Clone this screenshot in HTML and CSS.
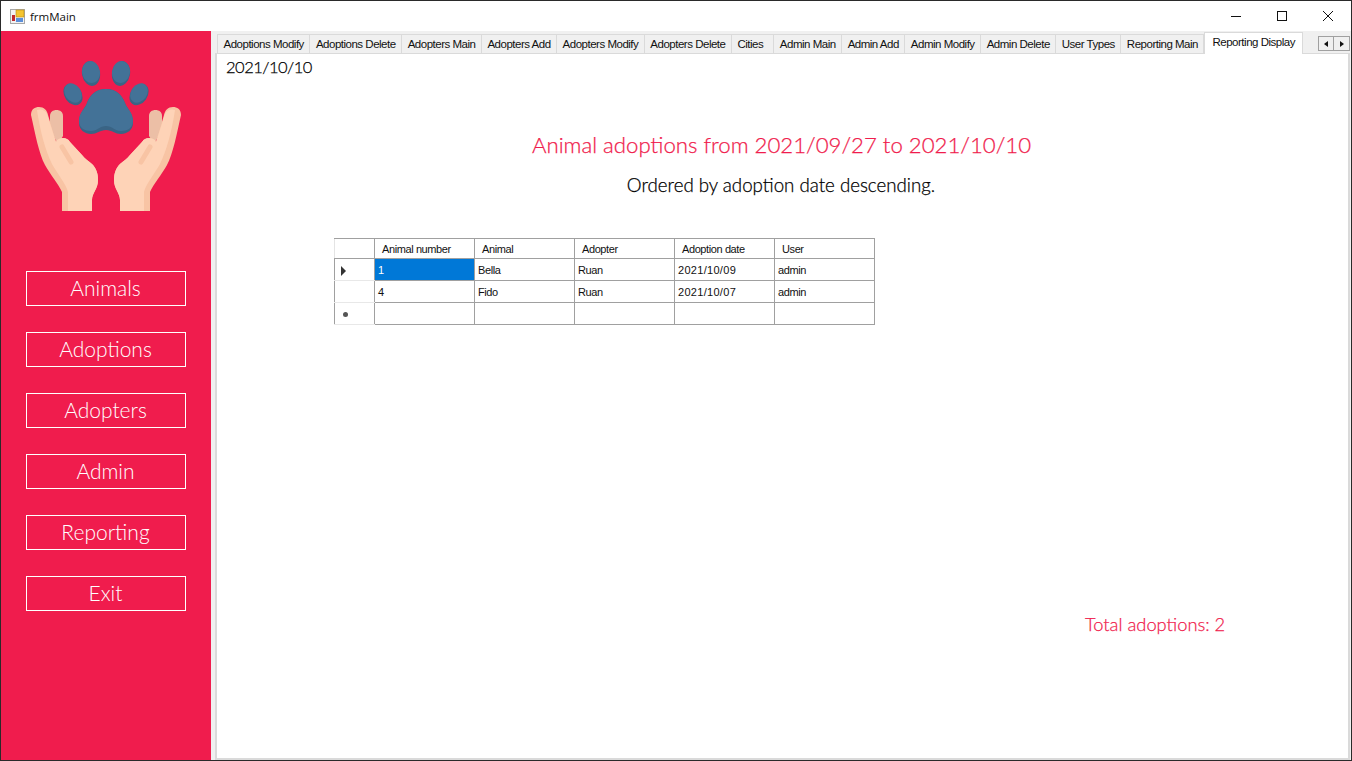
FILE: index.html
```html
<!DOCTYPE html>
<html lang="en">
<head>
  <meta charset="UTF-8" />
  <title>frmMain</title>
  <link rel="stylesheet" href="styles.css">
</head>
<body>
  <div class="window">
    <div class="titlebar">
      <svg class="app-icon" width="15" height="15" viewBox="0 0 15 15">
        <rect x="0.5" y="0.5" width="14" height="14" fill="#f2f2f2" stroke="#a8a8a8"/>
        <rect x="6" y="1" width="8" height="7" fill="#f4c430" stroke="#b98a10" stroke-width="0.6"/>
        <rect x="2" y="6" width="3" height="6" fill="#c0282d"/>
        <rect x="6" y="9" width="7" height="4" fill="#5b8fd9"/>
      </svg>
      <span class="title-text">frmMain</span>
      <div class="controls">
        <svg width="46" height="30" viewBox="0 0 46 30"><path d="M18 15.500h10" stroke="#111" fill="none"/></svg>
        <svg width="46" height="30" viewBox="0 0 46 30"><rect x="18.500" y="10.500" width="9" height="9" stroke="#111" fill="none"/></svg>
        <svg width="46" height="30" viewBox="0 0 46 30"><path d="M18 10l10 10M28 10l-10 10" stroke="#111" fill="none"/></svg>
      </div>
    </div>

    <div class="main">
      <aside class="sidebar">
        <svg class="logo" width="152" height="152" viewBox="30 60 152 152">
          <defs>
            <g id="hand">
              <path d="M50 116c0-4 3-6 6.500-6s6.500 2 6.500 6v20l-5 8-8-14z" fill="#ecbfa6"/>
              <path d="M31 115c0-6 4-8 8-8 5 0 8 3 9 8l8 27c1-3 4-4 7-4 3 0 5 1 7 4l12 13c3 4 7 6 10 9 4 4 6 9 6 16 0 9-6 13-6 20v11H62v-19c-3-7-12-18-17-27-6-11-10-32-14-50z" fill="#f8c4a4"/>
              <path d="M37 110c5-2 10 1 11 7l8 25c1-3 4-4 7-4 3 0 5 1 7 4l12 13c3 4 7 6 10 9 4 4 6 9 6 16 0 9-6 13-6 20v11H68v-19c-2-8-11-19-16-28-6-12-12-33-15-54z" fill="#fed3b7"/>
              <path d="M62 147l9 15" stroke="#f8c4a4" stroke-width="5" stroke-linecap="round" fill="none"/>
            </g>
          </defs>
          <use href="#hand"/>
          <use href="#hand" transform="translate(212 0) scale(-1 1)"/>
          <ellipse cx="91" cy="73.500" rx="9" ry="12.500" transform="rotate(-10 91 73.500)" fill="#3a6485"/>
          <ellipse cx="121" cy="73.500" rx="9" ry="12.500" transform="rotate(10 121 73.500)" fill="#3a6485"/>
          <ellipse cx="73" cy="94.500" rx="8.500" ry="11.500" transform="rotate(-35 73 94.500)" fill="#3a6485"/>
          <ellipse cx="139" cy="94.500" rx="8.500" ry="11.500" transform="rotate(35 139 94.500)" fill="#3a6485"/>
          <ellipse cx="91" cy="72" rx="9" ry="11" transform="rotate(-10 91 72)" fill="#437297"/>
          <ellipse cx="121" cy="72" rx="9" ry="11" transform="rotate(10 121 72)" fill="#437297"/>
          <ellipse cx="73" cy="93" rx="8" ry="10.500" transform="rotate(-35 73 93)" fill="#437297"/>
          <ellipse cx="139" cy="93" rx="8" ry="10.500" transform="rotate(35 139 93)" fill="#437297"/>
          <path d="M106 89c10 0 16 6 19 14 2 6 8 9 8 20 0 7-6 11-12 11-6 0-9-4-15-4s-9 4-15 4c-6 0-12-4-12-11 0-11 6-14 8-20 3-8 9-14 19-14z" fill="#3a6485"/>
          <path d="M106 89c10 0 16 6 19 14 2 6 8 9 8 18 0 7-6 10-12 10-6 0-9-5-15-5s-9 5-15 5c-6 0-12-3-12-10 0-9 6-12 8-18 3-8 9-14 19-14z" fill="#437297"/>
        </svg>
        <nav class="nav">
          <button class="nav-btn">Animals</button>
          <button class="nav-btn">Adoptions</button>
          <button class="nav-btn">Adopters</button>
          <button class="nav-btn">Admin</button>
          <button class="nav-btn">Reporting</button>
          <button class="nav-btn">Exit</button>
        </nav>
      </aside>

      <section class="tabcontrol">
        <div class="tabstrip">
          <div class="tab">Adoptions Modify</div>
          <div class="tab">Adoptions Delete</div>
          <div class="tab">Adopters Main</div>
          <div class="tab">Adopters Add</div>
          <div class="tab">Adopters Modify</div>
          <div class="tab">Adopters Delete</div>
          <div class="tab tab-cities">Cities</div>
          <div class="tab">Admin Main</div>
          <div class="tab">Admin Add</div>
          <div class="tab">Admin Modify</div>
          <div class="tab">Admin Delete</div>
          <div class="tab">User Types</div>
          <div class="tab">Reporting Main</div>
          <div class="tab active">Reporting Display</div>
          <div class="scroll-btns">
            <div class="scroll-btn"><span class="arrow-left"></span></div>
            <div class="scroll-btn"><span class="arrow-right"></span></div>
          </div>
        </div>

        <div class="page">
          <div class="date">2021/10/10</div>
          <h1 class="report-title">Animal adoptions from 2021/09/27 to 2021/10/10</h1>
          <p class="report-sub">Ordered by adoption date descending.</p>

          <table class="grid">
            <thead>
              <tr>
                <th class="row-head"></th>
                <th>Animal number</th>
                <th>Animal</th>
                <th>Adopter</th>
                <th>Adoption date</th>
                <th>User</th>
              </tr>
            </thead>
            <tbody>
              <tr>
                <td class="row-head"><span class="row-arrow"></span></td>
                <td class="selected">1</td>
                <td>Bella</td>
                <td>Ruan</td>
                <td class="num">2021/10/09</td>
                <td>admin</td>
              </tr>
              <tr>
                <td class="row-head"></td>
                <td>4</td>
                <td>Fido</td>
                <td>Ruan</td>
                <td class="num">2021/10/07</td>
                <td>admin</td>
              </tr>
              <tr>
                <td class="row-head"><span class="row-new"></span></td>
                <td></td>
                <td></td>
                <td></td>
                <td></td>
                <td></td>
              </tr>
            </tbody>
          </table>

          <div class="total">Total adoptions: 2</div>
        </div>
      </section>
    </div>
  </div>
</body>
</html>
```

FILE: styles.css
```css
html, body {
  margin: 0;
  padding: 0;
  height: 100%;
  overflow: hidden;
}

body {
  font-family: "Liberation Sans", Arial, sans-serif;
  background: #f0f0f0;
}

.window {
  box-sizing: border-box;
  width: 1352px;
  height: 761px;
  display: flex;
  flex-direction: column;
  border: 1px solid #2a2a2a;
}

/* Title bar */
.titlebar {
  height: 30px;
  background: white;
  display: flex;
  align-items: center;
  padding-left: 9px;
  flex-shrink: 0;
}

.app-icon {
  margin-right: 5px;
}

.title-text {
  font-family: "Open Sans", sans-serif;
  font-size: 11.5px;
  color: #111;
}

.controls {
  margin-left: auto;
  display: flex;
  height: 30px;
}

/* Sidebar */
.main {
  flex: 1;
  display: flex;
  min-height: 0;
}

.sidebar {
  width: 210px;
  background: #f01c4d;
  flex-shrink: 0;
  padding: 29px 0 0 25px;
  box-sizing: border-box;
}

.logo {
  display: block;
  margin-left: 4px;
}

.nav {
  margin-top: 59px;
  display: flex;
  flex-direction: column;
  gap: 26px;
}

.nav-btn {
  width: 160px;
  height: 35px;
  padding: 0 1px 2px 0;
  background: transparent;
  border: 1px solid white;
  color: white;
  font-family: Lato, sans-serif;
  font-weight: 300;
  font-size: 21px;
  cursor: pointer;
}

/* Tabs */
.tabcontrol {
  flex: 1;
  display: flex;
  flex-direction: column;
  min-width: 0;
  padding: 0 1px 0 4px;
}

.tabstrip {
  height: 22px;
  display: flex;
  align-items: flex-end;
  padding-left: 2px;
  flex-shrink: 0;
  position: relative;
}

.tab {
  box-sizing: border-box;
  height: 19px;
  padding: 0 5.5px;
  background: #f0f0f0;
  border: 1px solid #dadada;
  border-left: none;
  border-bottom: none;
  font-size: 11.5px;
  letter-spacing: -0.49px;
  line-height: 19px;
  color: #111;
  white-space: nowrap;
}

.tab:first-child {
  border-left: 1px solid #dadada;
}

.tab-cities {
  padding-right: 10px;
}

.tab.active {
  height: 22px;
  line-height: 19px;
  padding: 0 7px;
  background: white;
  position: relative;
  top: 1px;
  z-index: 1;
  border-left: 1px solid #dadada;
}

.scroll-btns {
  position: absolute;
  right: 0;
  top: 5px;
  display: flex;
}

.scroll-btn {
  box-sizing: border-box;
  width: 16px;
  height: 15px;
  background: #f0f0f0;
  border: 1px solid #a0a0a0;
  display: flex;
  align-items: center;
  justify-content: center;
}

.scroll-btn + .scroll-btn {
  border-left: none;
}

.arrow-left {
  border-top: 3px solid transparent;
  border-bottom: 3px solid transparent;
  border-right: 4px solid #111;
}

.arrow-right {
  border-top: 3px solid transparent;
  border-bottom: 3px solid transparent;
  border-left: 4px solid #111;
}

/* Tab page */
.page {
  flex: 1;
  box-sizing: border-box;
  background: white;
  border: 1px solid #dadada;
  border-width: 1px 2px 2px 2px;
  padding: 3px 0 0 9px;
  position: relative;
  min-height: 0;
}

.date {
  font-family: Lato, sans-serif;
  font-weight: 300;
  -webkit-text-stroke: 0.25px #000;
  font-size: 16.5px;
  letter-spacing: -0.5px;
  line-height: 20px;
  color: #000;
}

.report-title {
  margin: 53px 0 0 -11px;
  text-align: center;
  font-family: Lato, sans-serif;
  font-weight: 300;
  -webkit-text-stroke: 0.25px #f01c4d;
  font-size: 22.2px;
  line-height: 30px;
  color: #f01c4d;
}

.report-sub {
  margin: 14px 0 0 -12px;
  text-align: center;
  font-family: Lato, sans-serif;
  font-weight: 300;
  -webkit-text-stroke: 0.25px #000;
  font-size: 18.7px;
  line-height: 22px;
  color: #000;
}

/* Data grid */
.grid {
  margin: 42px 0 0 108px;
  border-collapse: collapse;
  table-layout: fixed;
  width: 541px;
  font-size: 11px;
  letter-spacing: -0.4px;
  color: #111;
}

.grid th {
  height: 20px;
  padding: 0 0 0 7px;
  box-sizing: border-box;
  font-weight: normal;
  text-align: left;
  background: white;
  border: 1px solid #a0a0a0;
  border-left-color: #e4e4e4;
}

.grid td {
  height: 22px;
  padding: 0 0 0 3px;
  box-sizing: border-box;
  border: 1px solid #a0a0a0;
}

.grid .num {
  letter-spacing: 0.3px;
}

.grid .row-head {
  width: 40px;
  padding: 0;
  border-right-color: #a0a0a0;
  border-bottom-color: #e8e8e8;
  text-align: center;
  background: white;
}

.grid thead .row-head {
  border-bottom-color: #a0a0a0;
}

.grid .selected {
  background: #0078d7;
  color: white;
}

.row-arrow {
  display: inline-block;
  margin-right: 22px;
  border-top: 5px solid transparent;
  border-bottom: 5px solid transparent;
  border-left: 5px solid #333;
  vertical-align: middle;
}

.row-new {
  display: inline-block;
  margin-right: 19px;
  width: 5px;
  height: 5px;
  border-radius: 50%;
  background: #555;
  vertical-align: middle;
}

.total {
  position: absolute;
  left: 868px;
  top: 559px;
  font-family: Lato, sans-serif;
  font-weight: 300;
  -webkit-text-stroke: 0.25px #f01c4d;
  font-size: 18.3px;
  line-height: 22px;
  color: #f01c4d;
  white-space: nowrap;
}
```
